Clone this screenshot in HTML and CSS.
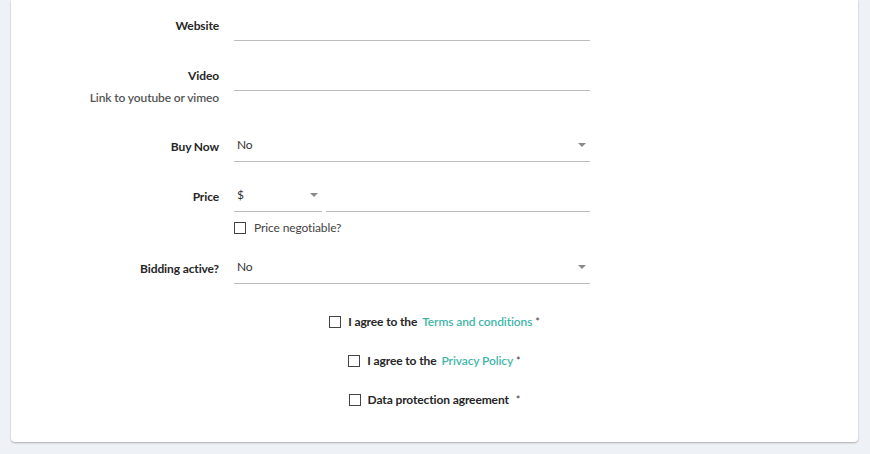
FILE: index.html
```html
<!DOCTYPE html>
<html lang="en">
<head>
<meta charset="utf-8">
<title>Listing form</title>
<link rel="stylesheet" href="styles.css">
</head>
<body>
<div class="page">
  <div class="card">
    <div class="row">
      <div class="label-col"><div class="label">Website</div></div>
      <div class="field-col"><div class="field"></div></div>
    </div>
    <div class="row">
      <div class="label-col">
        <div class="label">Video</div>
        <div class="sublabel">Link to youtube or vimeo</div>
      </div>
      <div class="field-col"><div class="field"></div></div>
    </div>
    <div class="row">
      <div class="label-col"><div class="label">Buy Now</div></div>
      <div class="field-col"><div class="field select"><span class="value">No</span><span class="caret"></span></div></div>
    </div>
    <div class="row">
      <div class="label-col"><div class="label">Price</div></div>
      <div class="field-col">
        <div class="price-line">
          <div class="field select currency"><span class="value">$</span><span class="caret"></span></div>
          <div class="field amount"></div>
        </div>
        <div class="check-line"><span class="box"></span><span class="check-text">Price negotiable?</span></div>
      </div>
    </div>
    <div class="row">
      <div class="label-col"><div class="label">Bidding active?</div></div>
      <div class="field-col"><div class="field select"><span class="value">No</span><span class="caret"></span></div></div>
    </div>
    <div class="agreements">
      <div class="agree agree-terms"><span class="box"></span><span class="agree-text"><b>I agree to the</b><a class="link">Terms and conditions</a><span class="star">*</span></span></div>
      <div class="agree"><span class="box"></span><span class="agree-text"><b>I agree to the</b><a class="link">Privacy Policy</a><span class="star">*</span></span></div>
      <div class="agree"><span class="box"></span><span class="agree-text"><b>Data protection agreement</b><span class="star wide">*</span></span></div>
    </div>
  </div>
</div>
</body>
</html>
```
FILE: styles.css
```css
html, body {
  margin: 0;
  padding: 0;
  background: #eef1f5;
  font-family: Lato, "Open Sans", "Liberation Sans", sans-serif;
  font-size: 12px;
  letter-spacing: -0.12px;
  color: #333;
}
.page {
  padding: 0 12px 11px 11px;
}
.card {
  background: #fff;
  border-radius: 0 0 4px 4px;
  box-shadow: 0 1px 2px rgba(0, 0, 0, 0.28), 0 0 1px rgba(0, 0, 0, 0.08);
  padding: 10px 0 35px 0;
  height: 397px;
}
.row {
  display: flex;
  align-items: flex-start;
  margin-bottom: 19px;
}
.label-col {
  width: 208px;
  margin-right: 15px;
  text-align: right;
}
.label {
  line-height: 28px;
  padding-top: 2px;
  font-weight: 700;
  color: #262626;
}
.sublabel {
  line-height: 16px;
  margin-bottom: 6px;
  font-weight: 600;
  color: #555;
}
.field-col {
  width: 356px;
}
.field {
  height: 30px;
  border-bottom: 1px solid #bdbdbd;
  box-sizing: content-box;
  display: flex;
  align-items: center;
  padding: 0 4px 0 3px;
  position: relative;
}
.value {
  flex: 1;
  color: #333;
  line-height: 30px;
  padding-bottom: 2px;
}
.caret {
  width: 0;
  height: 0;
  border-left: 4px solid transparent;
  border-right: 4px solid transparent;
  border-top: 4px solid #8a8a8a;
  margin-bottom: 3px;
}
.price-line {
  display: flex;
  gap: 4px;
}
.currency {
  width: 81px;
}
.amount {
  flex: 1;
}
.check-line {
  display: flex;
  align-items: center;
  margin-top: 10px;
  height: 12px;
}
.box {
  width: 10px;
  height: 10px;
  border: 1px solid #444;
  display: inline-block;
  flex: none;
}
.check-text {
  margin-left: 8px;
  color: #444;
  line-height: 12px;
}
.agreements {
  display: flex;
  flex-direction: column;
  gap: 25px;
  margin-top: 31px;
}
.agree {
  display: flex;
  justify-content: center;
  align-items: center;
  height: 14px;
}
.agree .box {
  margin-right: 7px;
}
.agree-text {
  line-height: 14px;
  color: #262626;
}
.agree-text b {
  font-weight: 700;
}
.link {
  color: #3fb5a8;
  font-weight: 600;
  margin-left: 5px;
}
.star {
  margin-left: 3px;
  color: #444;
  font-size: 11px;
}
.star.wide {
  margin-left: 7px;
}
```
